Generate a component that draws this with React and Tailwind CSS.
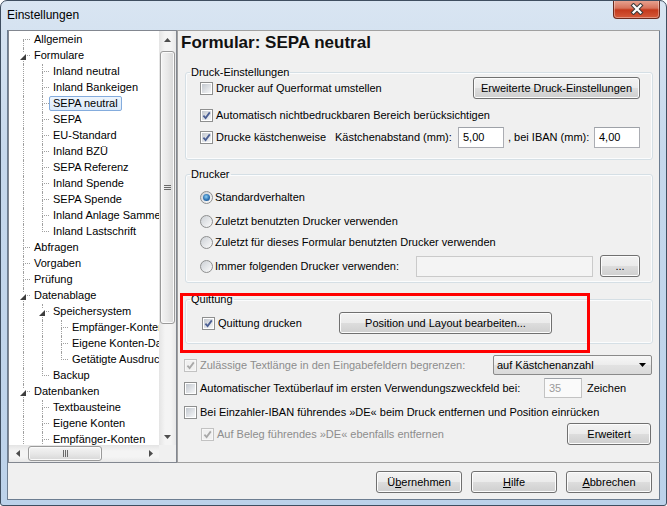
import React from "react";

// Tree items shown in the left navigation (lines = ancestor levels whose line passes through)
const TREE = [
  { t: "Allgemein", l: 0, next: true, first: true },
  { t: "Formulare", l: 0, next: true, exp: true },
  { t: "Inland neutral", l: 1, lines: [1], next: true },
  { t: "Inland Bankeigen", l: 1, lines: [1], next: true },
  { t: "SEPA neutral", l: 1, lines: [1], next: true, sel: true },
  { t: "SEPA", l: 1, lines: [1], next: true },
  { t: "EU-Standard", l: 1, lines: [1], next: true },
  { t: "Inland BZÜ", l: 1, lines: [1], next: true },
  { t: "SEPA Referenz", l: 1, lines: [1], next: true },
  { t: "Inland Spende", l: 1, lines: [1], next: true },
  { t: "SEPA Spende", l: 1, lines: [1], next: true },
  { t: "Inland Anlage Sammelüberweisung", l: 1, lines: [1], next: true },
  { t: "Inland Lastschrift", l: 1, lines: [1], next: false },
  { t: "Abfragen", l: 0, next: true },
  { t: "Vorgaben", l: 0, next: true },
  { t: "Prüfung", l: 0, next: true },
  { t: "Datenablage", l: 0, next: true, exp: true },
  { t: "Speichersystem", l: 1, lines: [1], next: true, exp: true },
  { t: "Empfänger-Konten", l: 2, lines: [1, 1], next: true },
  { t: "Eigene Konten-Datei", l: 2, lines: [1, 1], next: true },
  { t: "Getätigte Ausdrucke", l: 2, lines: [1, 1], next: false },
  { t: "Backup", l: 1, lines: [1], next: false },
  { t: "Datenbanken", l: 0, next: true, exp: true },
  { t: "Textbausteine", l: 1, lines: [1], next: true },
  { t: "Eigene Konten", l: 1, lines: [1], next: true },
  { t: "Empfänger-Konten", l: 1, lines: [1], next: true },
];

const BTN =
  "flex items-center justify-center shrink-0 border border-[#707070] rounded-[3px] bg-[linear-gradient(to_bottom,#f2f2f2_0%,#ebebeb_50%,#dddddd_50%,#cfcfcf_100%)] shadow-[inset_0_0_0_1px_#fcfcfc] text-black";

function Btn({ className = "", children }) {
  return <div className={`${BTN} ${className}`}>{children}</div>;
}

function Check({ checked, disabled }) {
  return (
    <span
      className={`flex w-[13px] h-[13px] shrink-0 border p-[1px] ${
        disabled ? "border-[#c2c2c2] bg-[#f7f7f7]" : "border-[#8e8f8f] bg-white"
      }`}
    >
      <span
        className={`flex-1 ${
          disabled
            ? "bg-[#f0f0f0]"
            : "bg-[linear-gradient(135deg,#c3c8cf,#f6f7f8)]"
        }`}
      >
        {checked && (
          <svg width="9" height="9" viewBox="0 0 9 9" className="block">
            <path
              d="M1.4 4.6 L3.6 7 L7.8 1.4"
              fill="none"
              stroke={disabled ? "#a8a8a8" : "#4b5f94"}
              strokeWidth="1.8"
            />
          </svg>
        )}
      </span>
    </span>
  );
}

function Radio({ on }) {
  return (
    <span className="flex w-[13px] h-[13px] shrink-0 items-center justify-center rounded-full border border-[#8e8f8f] bg-[linear-gradient(135deg,#ccd0d5,#fbfbfb)]">
      {on && (
        <span className="w-[7px] h-[7px] rounded-full bg-[radial-gradient(circle_at_45%_40%,#8fd0f4_0%,#2b70b1_55%,#1b477e_100%)]" />
      )}
    </span>
  );
}

function Field({ className = "", children }) {
  return (
    <div
      className={`flex items-center shrink-0 border border-[#abadb3] border-t-[#9ea2a8] px-[4px] ${className}`}
    >
      {children}
    </div>
  );
}

// Vista style group box; padding goes on the inner wrapper so the legend keeps its place
function Group({ title, className = "", inner = "", children }) {
  return (
    <fieldset
      className={`mx-[7px] p-0 border border-[#d5dfe5] rounded-[3px] shadow-[inset_0_0_0_1px_#fbfcfd] ${className}`}
    >
      <legend className="ml-[4px] px-[1px] leading-[14px] text-black">{title}</legend>
      <div className={inner}>{children}</div>
    </fieldset>
  );
}

function TreeRow({ r }) {
  const { t, l, lines = [], next, first, exp, sel } = r;
  return (
    <div className="flex h-[16px] pl-[2px] shrink-0 items-start">
      {Array.from({ length: l }).map((_, j) => (
        <span key={j} className="w-[19px] h-full shrink-0">
          {lines[j] ? (
            <span className="block ml-[12px] h-full border-l border-dotted border-[#a0a0a0]" />
          ) : null}
        </span>
      ))}
      <span className="relative w-[19px] h-full shrink-0 flex flex-col">
        <span
          className={`block ml-[12px] w-[7px] h-[8px] border-b border-dotted border-[#a0a0a0] ${
            first ? "" : "border-l"
          }`}
        />
        <span
          className={`block ml-[12px] h-[8px] ${
            next ? "border-l border-dotted border-[#a0a0a0]" : ""
          }`}
        />
        {exp && (
          <span className="absolute left-[7px] top-[4px] w-[9px] h-[9px] bg-white flex items-center justify-center">
            <svg width="6" height="6" viewBox="0 0 6 6">
              <polygon points="6,0 6,6 0,6" fill="#3d3d3d" />
            </svg>
          </span>
        )}
      </span>
      <span
        className={`h-[15px] px-[3px] border leading-[13px] whitespace-nowrap ${
          sel
            ? "border-[#84acdd] rounded-[2px] bg-[linear-gradient(to_bottom,#eef5fd,#dbe9f9)]"
            : "border-transparent"
        }`}
      >
        {t}
      </span>
    </div>
  );
}

function Tree() {
  return (
    <div className="w-[169px] h-[433px] shrink-0 flex flex-col border border-[#828790] bg-white">
      <div className="flex h-[414px]">
        <div className="w-[150px] overflow-hidden pt-[1px] flex flex-col">
          {TREE.map((r, i) => (
            <TreeRow key={i} r={r} />
          ))}
        </div>
        {/* vertical scrollbar */}
        <div className="w-[17px] flex flex-col bg-[linear-gradient(to_right,#e4e4e4,#f4f4f4_35%,#f4f4f4_70%,#e8e8e8)]">
          <div className="h-[17px] flex items-center justify-center">
            <svg width="7" height="4" viewBox="0 0 7 4">
              <polygon points="0,4 7,4 3.5,0" fill="#4d4d4d" />
            </svg>
          </div>
          <div className="mt-[3px] mx-[1px] h-[273px] rounded-[3px] border border-[#9a9a9a] bg-[linear-gradient(to_right,#f4f4f4,#e8e8e8_50%,#d7d7d7)] shadow-[inset_0_0_0_1px_#fafafa] flex items-center justify-center">
            <svg width="7" height="7" viewBox="0 0 7 7">
              <path d="M0 1.5h7M0 3.5h7M0 5.5h7" stroke="#6a6a6a" strokeWidth="1" />
            </svg>
          </div>
          <div className="flex-1" />
          <div className="h-[17px] flex items-center justify-center">
            <svg width="7" height="4" viewBox="0 0 7 4">
              <polygon points="0,0 7,0 3.5,4" fill="#4d4d4d" />
            </svg>
          </div>
        </div>
      </div>
      <div className="flex h-[17px]">
        {/* horizontal scrollbar */}
        <div className="w-[150px] flex items-center bg-[linear-gradient(to_bottom,#e4e4e4,#f4f4f4_35%,#f4f4f4_70%,#e8e8e8)]">
          <div className="w-[17px] h-full flex items-center justify-center">
            <svg width="4" height="7" viewBox="0 0 4 7">
              <polygon points="4,0 4,7 0,3.5" fill="#4d4d4d" />
            </svg>
          </div>
          <div className="ml-[2px] w-[74px] h-[15px] rounded-[3px] border border-[#9a9a9a] bg-[linear-gradient(to_bottom,#f4f4f4,#e8e8e8_50%,#d7d7d7)] shadow-[inset_0_0_0_1px_#fafafa] flex items-center justify-center">
            <svg width="7" height="7" viewBox="0 0 7 7">
              <path d="M1.5 0v7M3.5 0v7M5.5 0v7" stroke="#6a6a6a" strokeWidth="1" />
            </svg>
          </div>
          <div className="flex-1" />
          <div className="w-[17px] h-full flex items-center justify-center">
            <svg width="4" height="7" viewBox="0 0 4 7">
              <polygon points="0,0 0,7 4,3.5" fill="#4d4d4d" />
            </svg>
          </div>
        </div>
        <div className="w-[17px] bg-[#f0f0f0]" />
      </div>
    </div>
  );
}

function Panel() {
  return (
    <div className="flex-1 h-[433px] flex flex-col border-l border-t border-b border-[#a0a0a0] text-black">
      <div className="mt-[2px] h-[20px] leading-[20px] pl-[3px] text-[17px] font-bold text-[#111]">
        Formular: SEPA neutral
      </div>

      <Group title="Druck-Einstellungen" className="mt-[12px]" inner="pl-[14px] pr-[12px] pb-[11px]">
        <div className="-mt-[2px] h-[22px] flex items-center">
          <Check />
          <span className="ml-[3px]">Drucker auf Querformat umstellen</span>
          <Btn className="ml-auto w-[167px] h-[22px]">Erweiterte Druck-Einstellungen</Btn>
        </div>
        <div className="mt-[6px] h-[20px] flex items-center">
          <Check checked />
          <span className="ml-[3px]">
            Automatisch nichtbedruckbaren Bereich berücksichtigen
          </span>
        </div>
        <div className="mt-[2px] h-[21px] flex items-center">
          <div className="w-[135px] flex items-center">
            <Check checked />
            <span className="ml-[3px]">Drucke kästchenweise</span>
          </div>
          <span className="w-[123px]">Kästchenabstand (mm):</span>
          <Field className="w-[46px] h-[21px] bg-white">5,00</Field>
          <span className="w-[90px] pl-[4px]">, bei IBAN (mm):</span>
          <Field className="w-[46px] h-[21px] bg-white">4,00</Field>
        </div>
      </Group>

      <Group title="Drucker" className="mt-[7px]" inner="pl-[14px] pr-[12px] pb-[5px]">
        <div className="mt-[7px] h-[18px] flex items-center">
          <Radio on />
          <span className="ml-[2px]">Standardverhalten</span>
        </div>
        <div className="mt-[6px] h-[18px] flex items-center">
          <Radio />
          <span className="ml-[2px]">Zuletzt benutzten Drucker verwenden</span>
        </div>
        <div className="mt-[3px] h-[18px] flex items-center">
          <Radio />
          <span className="ml-[2px]">
            Zuletzt für dieses Formular benutzten Drucker verwenden
          </span>
        </div>
        <div className="mt-[4px] h-[22px] flex items-center">
          <Radio />
          <span className="ml-[2px]">Immer folgenden Drucker verwenden:</span>
          <div className="ml-auto w-[177px] h-[21px] border border-[#cacaca] bg-[#f4f4f4]" />
          <Btn className="ml-[7px] w-[40px] h-[22px]">...</Btn>
        </div>
      </Group>

      <Group title="Quittung" className="mt-[9px]" inner="pl-[16px] pr-[12px] pb-[9px]">
        <div className="mt-[6px] h-[22px] flex items-center">
          <div className="w-[137px] flex items-center">
            <Check checked />
            <span className="ml-[3px]">Quittung drucken</span>
          </div>
          <Btn className="w-[213px] h-[22px]">Position und Layout bearbeiten...</Btn>
        </div>
      </Group>

      <div className="mt-[11px] h-[20px] flex items-center pl-[6px]">
        <div className="w-[309px] flex items-center">
          <Check checked disabled />
          <span className="ml-[3px] text-[#8d8d8d]">
            Zulässige Textlänge in den Eingabefeldern begrenzen:
          </span>
        </div>
        <div className="w-[159px] h-[20px] flex items-center pl-[3px] pr-[5px] border border-[#8a8a8a] rounded-[2px] bg-[linear-gradient(to_bottom,#f7f7f7,#ececec_50%,#e2e2e2_50%,#dadada)]">
          <span>auf Kästchenanzahl</span>
          <svg width="7" height="4" viewBox="0 0 7 4" className="ml-auto">
            <polygon points="0,0 7,0 3.5,4" fill="#000" />
          </svg>
        </div>
      </div>

      <div className="mt-[3px] h-[20px] flex items-center pl-[6px]">
        <div className="w-[360px] flex items-center">
          <Check />
          <span className="ml-[3px]">
            Automatischer Textüberlauf im ersten Verwendungszweckfeld bei:
          </span>
        </div>
        <Field className="w-[38px] h-[20px] bg-[#fafafa] text-[#9a9a9a] border-[#c3c3c3]">35</Field>
        <span className="ml-[5px]">Zeichen</span>
      </div>

      <div className="mt-[5px] h-[18px] flex items-center pl-[6px]">
        <Check />
        <span className="ml-[3px]">
          Bei Einzahler-IBAN führendes »DE« beim Druck entfernen und Position einrücken
        </span>
      </div>

      <div className="mt-[2px] h-[22px] flex items-center pl-[23px] pr-[9px]">
        <Check checked disabled />
        <span className="ml-[3px] text-[#8d8d8d]">
          Auf Beleg führendes »DE« ebenfalls entfernen
        </span>
        <Btn className="ml-auto w-[84px] h-[22px]">Erweitert</Btn>
      </div>
    </div>
  );
}

export default function App() {
  return (
    <div className="relative w-[667px] h-[506px] overflow-hidden flex flex-col border border-[#3f4e60] rounded-t-[7px] rounded-b-[3px] bg-[linear-gradient(to_bottom,#d9e5f2,#c6d8ec_30%,#bcd2ea)] font-['Liberation_Sans',Arial,sans-serif] text-[11px] text-black">
      {/* title bar */}
      <div className="h-[29px] flex items-start shrink-0">
        <span className="pl-[6px] pt-[6px] text-[12px] leading-[16px] text-black">
          Einstellungen
        </span>
        <div className="ml-auto mr-[6px] w-[47px] h-[19px] -mt-[1px] flex items-center justify-center border border-t-0 border-[#6b2a1d] rounded-b-[4px] bg-[linear-gradient(to_bottom,#e9a795_0%,#d7735c_45%,#c4391c_55%,#d55a3a_100%)] shadow-[inset_0_0_0_1px_rgba(255,255,255,0.35)]">
          <svg width="14" height="12" viewBox="0 0 14 12">
            <path d="M3.5 2.5 L10.5 9.5 M10.5 2.5 L3.5 9.5" stroke="#3b3b3b" strokeWidth="4.2" strokeLinecap="square" />
            <path d="M3.5 2.5 L10.5 9.5 M10.5 2.5 L3.5 9.5" stroke="#fff" strokeWidth="2.2" strokeLinecap="square" />
          </svg>
        </div>
      </div>

      {/* window body */}
      <div className="flex px-[6px] shrink-0">
        <div className="w-[653px] h-[470px] flex flex-col bg-[#f0f0f0] border-l border-r border-b border-[#6c7d91]">
          <div className="flex h-[433px]">
            <Tree />
            <Panel />
          </div>
          <div className="flex-1 flex justify-end items-start pt-[8px] pr-[7px] gap-[9px]">
            <Btn className="w-[86px] h-[22px]">
              Ü<span className="underline">b</span>ernehmen
            </Btn>
            <Btn className="w-[86px] h-[22px]">
              <span className="underline">H</span>ilfe
            </Btn>
            <Btn className="w-[86px] h-[22px]">
              <span className="underline">A</span>bbrechen
            </Btn>
          </div>
        </div>
      </div>

      {/* annotation box */}
      <div className="absolute left-[179px] top-[292px] w-[410px] h-[60px] border-[3px] border-[#ff0000]" />
    </div>
  );
}
